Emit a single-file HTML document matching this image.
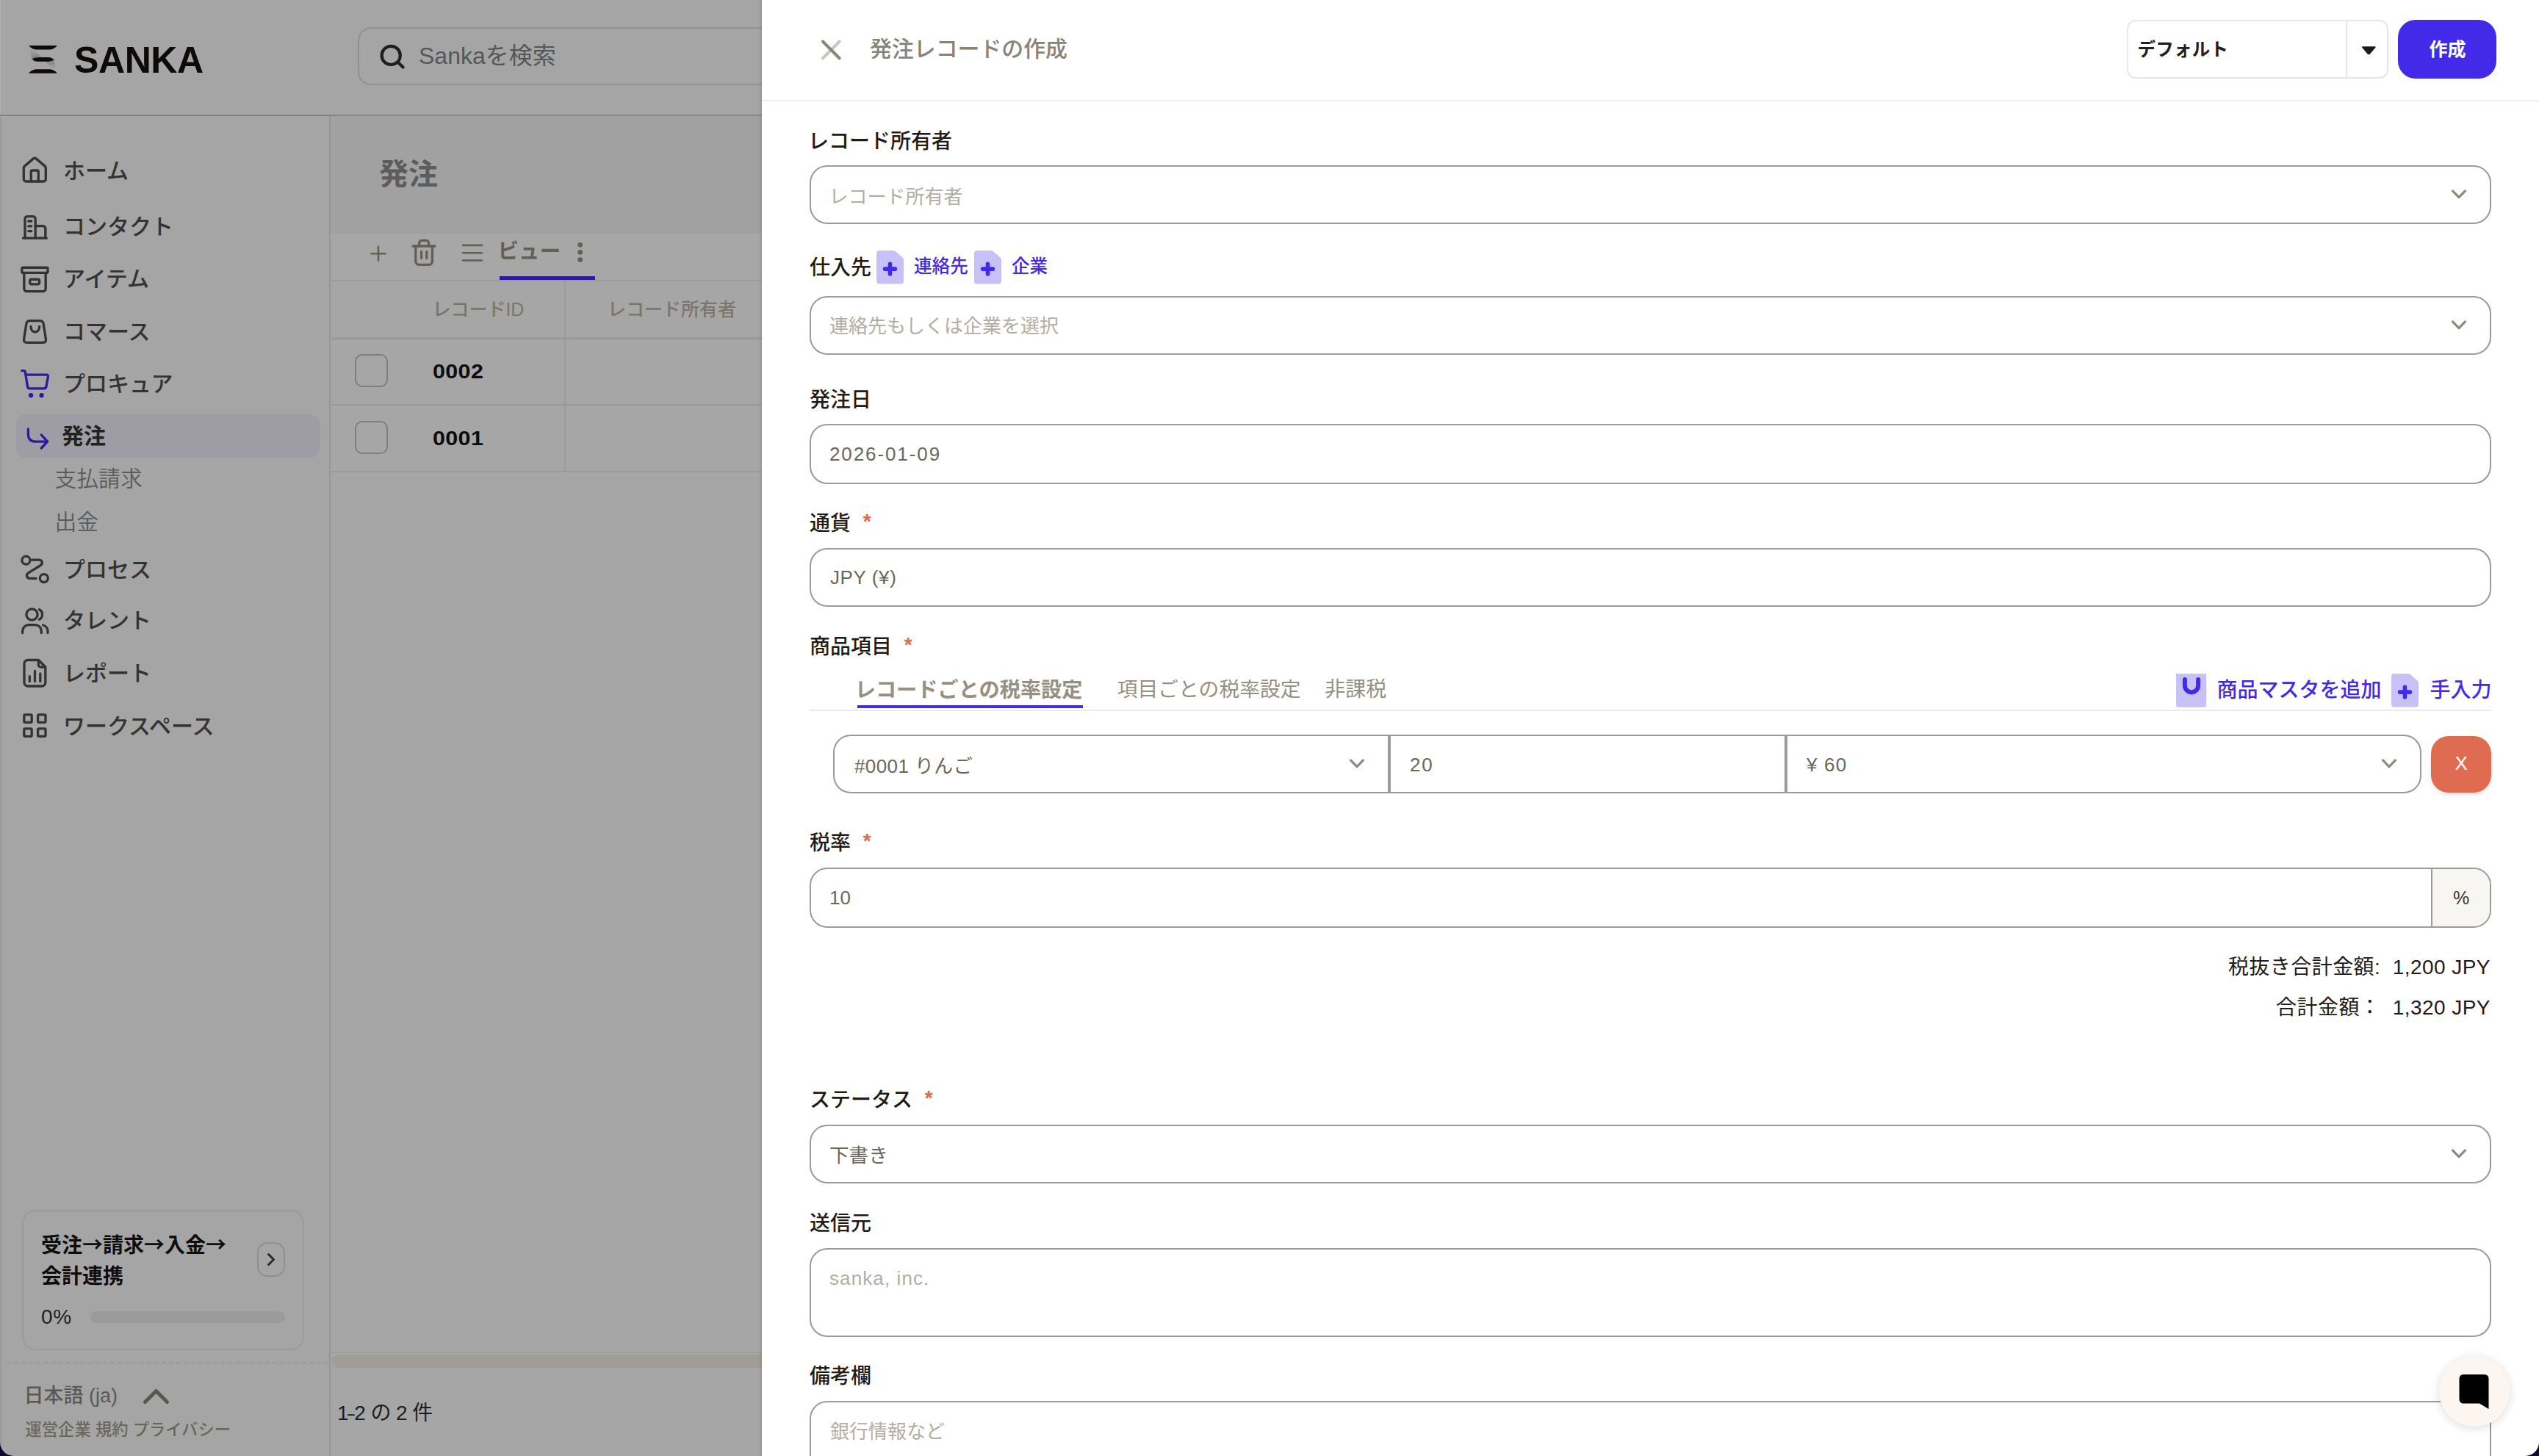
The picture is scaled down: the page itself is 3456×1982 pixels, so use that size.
<!DOCTYPE html>
<html lang="ja">
<head>
<meta charset="utf-8">
<title>発注レコードの作成 - SANKA</title>
<style>
*{box-sizing:border-box;margin:0;padding:0}
html,body{width:3456px;height:1982px;overflow:hidden;background:#a6a6a6}
body{font-family:"Liberation Sans","Noto Sans CJK JP",sans-serif;position:relative;color:#1f1f1f;-webkit-font-smoothing:antialiased}
.abs{position:absolute}
.t{position:absolute;white-space:nowrap;line-height:1}
svg{position:absolute;overflow:visible}
/* ---------- dimmed app (left) ---------- */
#app{position:absolute;left:0;top:0;width:1037px;height:1982px;background:#a5a5a5;overflow:hidden}
#topline{left:0;top:156px;width:1037px;height:2px;background:#858588}
#sideline{left:448px;top:158px;width:2px;height:1824px;background:#969696}
#leftedge{left:0;top:158px;width:2px;height:1824px;background:#9b9b9b}
.nav{font-size:30px;font-weight:500;color:#333;left:86px}
.sub{font-size:29.8px;font-weight:350;color:#5a5a5a;left:74.5px}
.ico{stroke:#333;fill:none;stroke-width:2;stroke-linecap:round;stroke-linejoin:round;width:40px;height:40px;left:27px}
/* ---------- drawer ---------- */
#drawer{position:absolute;left:1037px;top:0;width:2419px;height:1982px;background:#fff;box-shadow:-1px 0 4px rgba(0,0,0,.14)}
#dc{position:absolute;left:0;top:0;width:3456px;height:1982px;overflow:hidden}
.lbl{font-size:28px;font-weight:500;color:#1f1c18;left:1102px}
.req{color:#e0694a;font-weight:700;margin-left:9px;position:relative;top:-2.3px}
.fld{position:absolute;left:1102px;width:2289px;height:80px;border:2px solid #9b9b99;border-radius:24px;background:#fff}
.val{font-size:26px;color:#6a665e}
.ph{font-size:26px;color:#b3aea2}
.chev{stroke:#8e897e;fill:none;stroke-width:3.2;stroke-linecap:round;stroke-linejoin:round}
.ar{font-family:"Noto Sans CJK JP",sans-serif}
.link{font-size:28px;color:#432ae8;font-weight:500}
</style>
</head>
<body>
<div id="app">
  <div class="abs" style="left:450px;top:158px;width:587px;height:1824px;background:#a6a6a6"></div>
  <div class="abs" style="left:450px;top:158px;width:587px;height:160px;background:#a1a1a1"></div>
  <div class="abs" style="left:450px;top:318px;width:587px;height:64px;background:#a7a7a7"></div>
  <div class="abs" id="leftedge"></div>
  <div class="abs" style="left:0;top:0;width:1px;height:156px;background:#b0b0b0"></div>
  <div class="abs" id="topline"></div>
  <div class="abs" id="sideline"></div>
  <!-- logo -->
  <svg style="left:30px;top:52px" width="60" height="58" viewBox="30 52 60 58">
    <defs><linearGradient id="lg1" x1="0" y1="0" x2="0" y2="1"><stop offset="0" stop-color="#a9a9a9"/><stop offset="1" stop-color="#7e7e7e"/></linearGradient>
    <linearGradient id="lg2" x1="0" y1="0" x2="0" y2="1"><stop offset="0" stop-color="#7e7e7e"/><stop offset="1" stop-color="#a9a9a9"/></linearGradient></defs>
    <path d="M40 66.5L46.7 67.4L56 78L43.4 80.2Z" fill="url(#lg1)"/>
    <path d="M61.5 83.8L73.4 81.4L76.4 94.6L71.6 93.9Z" fill="url(#lg2)"/>
    <path d="M39 62.1H78Q73.5 67.6 66.5 67.6H50.5Q43.5 67.6 39 62.1Z" fill="#0e0a08"/>
    <path d="M43.3 80.3Q48.5 78 54 78H66.5Q70.5 78 73.6 81.5Q69.5 83.8 64.5 83.8H50Q46.5 83.8 43.3 80.3Z" fill="#0e0a08"/>
    <path d="M39 99.7H78Q73.5 94.2 66.5 94.2H50.5Q43.5 94.2 39 99.7Z" fill="#0e0a08"/>
  </svg>
  <div class="t" style="left:101px;top:57px;font-size:50px;font-weight:700;color:#0e0a08;letter-spacing:-0.4px">SANKA</div>
  <!-- search -->
  <div class="abs" style="left:487px;top:37px;width:700px;height:79px;border:2px solid #919191;border-radius:18px"></div>
  <svg style="left:512px;top:55px" width="44" height="44" viewBox="0 0 44 44" fill="none" stroke="#1e1e20" stroke-width="4.2" stroke-linecap="round"><circle cx="20.2" cy="20.4" r="12.6"/><path d="M29.6 29.8L36.6 36.6"/></svg>
  <div class="t" style="left:570px;top:60px;font-size:32px;color:#565656">Sankaを検索</div>
  <!-- sidebar -->
  <div class="abs" style="left:22px;top:564px;width:413px;height:59px;border-radius:12px;background:#9e9da6"></div>
  <svg style="left:0;top:0" width="448" height="1982" viewBox="0 0 448 1982" fill="none" stroke="#333" stroke-width="3.3" stroke-linecap="round" stroke-linejoin="round">
    <g transform="translate(27.3,212) scale(1.6667)" stroke-width="2"><path d="M15 21v-8a1 1 0 0 0-1-1h-4a1 1 0 0 0-1 1v8"/><path d="M3 10a2 2 0 0 1 .709-1.528l7-5.999a2 2 0 0 1 2.582 0l7 5.999A2 2 0 0 1 21 10v9a2 2 0 0 1-2 2H5a2 2 0 0 1-2-2z"/></g>
    <g transform="translate(27,289) scale(1.6667)" stroke-width="2"><path d="M4.2 21V5.4a2 2 0 0 1 2-2h4.5a2 2 0 0 1 2 2V21"/><path d="M12.7 11.2h6.2a2 2 0 0 1 2 2V21"/><path d="M2.75 21.1h19"/><path d="M7.1 7.2h2.3M7.1 11.3h2.3M7.1 15.4h2.3"/></g>
    <g transform="translate(27,360.4) scale(1.6667)" stroke-width="2"><rect x="1.7" y="2.3" width="21.1" height="4.3" rx="1"/><path d="M3.5 6.6v12.9a2.2 2.2 0 0 0 2.2 2.2h13.2a2.2 2.2 0 0 0 2.2-2.2V6.6"/><rect x="8.2" y="11.9" width="7.8" height="4" rx="1.4"/></g>
    <path d="M41 436.6H54Q58.6 436.6 59.2 441L62.4 461.5Q63 466.3 58.4 466.3H36.6Q32 466.3 32.6 461.5L35.8 441Q36.4 436.6 41 436.6Z"/><path d="M42 444.5c0 4.5 2.6 7.3 5.8 7.3s5.8-2.8 5.8-7.3"/>
    <g stroke="#2b1ba0"><path d="M29.8 504.7H32.2Q34 504.7 34.3 506.6L37.6 526.4Q38 528.8 40.4 528.8H60Q62.4 528.8 62.9 526.4L65.4 512.5Q65.8 510.1 63.4 510.1H35"/><circle cx="42.1" cy="538.2" r="1.5" fill="#2b1ba0"/><circle cx="56.6" cy="538.2" r="1.5" fill="#2b1ba0"/>
    <path d="M38.4 584V591Q38.4 601.2 48.6 601.2H64"/><path d="M56.3 592L64.6 601.2L56.3 610"/></g>
    <circle cx="35.4" cy="762.7" r="5.5"/><circle cx="59.8" cy="787.1" r="5.5"/><path d="M43.5 762.1H53.3a4 4 0 0 1 2.1 7.4L38.6 779.9a4 4 0 0 0 2.1 7.5H49"/>
    <circle cx="43.5" cy="836.5" r="7.6"/><path d="M30.7 861.5v-2.5a8.3 8.3 0 0 1 8.3-8.3h9a8.3 8.3 0 0 1 8.3 8.3v2.5"/><path d="M53.5 829.75A7.6 7.6 0 0 1 53.5 843.25"/><path d="M58.5 851a8.3 8.3 0 0 1 6.5 8.1v2.4"/>
    <path d="M52.5 898.5H38a5 5 0 0 0-5 5V929a5 5 0 0 0 5 5H56.8a5 5 0 0 0 5-5V908Z"/><path d="M52.3 898.8v6a3.3 3.3 0 0 0 3.3 3.3h6"/><path d="M40.3 920.6V927.6M47.5 913.4V927.6M54.8 917V927.6"/>
    <rect x="32.8" y="972.9" width="10.4" height="10.4" rx="1.6"/><rect x="51.6" y="972.9" width="10.4" height="10.4" rx="1.6"/><rect x="32.8" y="991.9" width="10.4" height="10.4" rx="1.6"/><rect x="51.6" y="991.9" width="10.4" height="10.4" rx="1.6"/>
  </svg>
  <div class="t nav" style="top:217.5px">ホーム</div>
  <div class="t nav" style="top:294px">コンタクト</div>
  <div class="t nav" style="top:364.5px">アイテム</div>
  <div class="t nav" style="top:436.5px">コマース</div>
  <div class="t nav" style="top:508px">プロキュア</div>
  <div class="t nav" style="top:579px;left:84px;font-weight:700;color:#222">発注</div>
  <div class="t sub" style="top:636.5px">支払請求</div>
  <div class="t sub" style="top:696px">出金</div>
  <div class="t nav" style="top:761px">プロセス</div>
  <div class="t nav" style="top:830px">タレント</div>
  <div class="t nav" style="top:902px">レポート</div>
  <div class="t nav" style="top:973.5px">ワークスペース</div>
  <!-- toolbar -->
  <svg style="left:449px;top:318px" width="588" height="66" viewBox="449 318 588 66" fill="none" stroke="#645f55" stroke-width="2.6" stroke-linecap="round" stroke-linejoin="round">
    <path d="M505.5 345.2H524.5M515 335.7V354.7"/>
    <g stroke-width="3.3"><path d="M562.2 335H592"/><path d="M570.6 335V331a3.6 3.6 0 0 1 3.6-3.6h5.8a3.6 3.6 0 0 1 3.6 3.6v4"/><path d="M565.8 335V355.8a4.5 4.5 0 0 0 4.5 4.5h13.6a4.5 4.5 0 0 0 4.5-4.5V335"/><path d="M573.6 342.5v9M580.8 342.5v9"/></g>
    <path d="M630 333.9H656M630 344.2H656M630 354.5H656"/>
    <g fill="#645f55" stroke="none"><circle cx="789.7" cy="333.2" r="3.3"/><circle cx="789.7" cy="343.4" r="3.3"/><circle cx="789.7" cy="353.6" r="3.3"/></g>
  </svg>
  <div class="t" style="left:677.5px;top:328px;font-size:28.6px;font-weight:700;color:#645f55">ビュー</div>
  <div class="abs" style="left:680px;top:376px;width:130px;height:6px;background:#2b1ba0"></div>
  <div class="abs" style="left:449px;top:381px;width:588px;height:2px;background:#9c9c9c"></div>
  <!-- table -->
  <div class="abs" style="left:449px;top:459px;width:588px;height:4px;background:#9b9b9b"></div>
  <div class="abs" style="left:449px;top:550px;width:588px;height:2px;background:#9a9a9a"></div>
  <div class="abs" style="left:449px;top:641px;width:588px;height:2px;background:#9a9a9a"></div>
  <div class="abs" style="left:768px;top:383px;width:2px;height:259px;background:#9a9a9a"></div>
  <div class="t" style="left:588.4px;top:408.5px;font-size:25px;font-weight:500;color:#7a766c">レコードID</div>
  <div class="t" style="left:827px;top:408.5px;font-size:25px;font-weight:500;color:#7a766c">レコード所有者</div>
  <div class="abs" style="left:483px;top:481.5px;width:45px;height:45px;border:2px solid #7f7f7f;border-radius:10px"></div>
  <div class="abs" style="left:483px;top:572.5px;width:45px;height:45px;border:2px solid #7f7f7f;border-radius:10px"></div>
  <div class="t" style="left:589px;top:493px;font-size:27px;font-weight:700;color:#0d0d0d;letter-spacing:.3px;transform:scaleX(1.13);transform-origin:0 50%">0002</div>
  <div class="t" style="left:589px;top:584px;font-size:27px;font-weight:700;color:#0d0d0d;letter-spacing:.3px;transform:scaleX(1.13);transform-origin:0 50%">0001</div>
  <!-- footer -->
  <div class="abs" style="left:449px;top:1840px;width:588px;height:2px;background:#9d9d9d"></div>
  <div class="abs" style="left:452px;top:1844px;width:585px;height:18px;background:#a09d97;border-radius:9px 0 0 9px"></div>
  <div class="t" style="left:459px;top:1910px;font-size:28px;color:#1c1c1c"><span style="letter-spacing:-1.5px">1</span><span style="display:inline-block;transform:scaleX(.62);transform-origin:0 50%;margin-right:-6.5px">–</span>2<span style="word-spacing:-1.1px"> の 2 件</span></div>
  <!-- onboarding card -->
  <div class="abs" style="left:30px;top:1647px;width:384px;height:191px;border:2px solid #9a9a9a;border-radius:18px"></div>
  <div class="t" style="left:56px;top:1671.5px;font-size:28px;font-weight:700;color:#0d0d0d;line-height:42px;white-space:normal;width:270px">受注<span class="ar">→</span>請求<span class="ar">→</span>入金<span class="ar">→</span><br>会計連携</div>
  <div class="abs" style="left:350px;top:1691px;width:38px;height:47px;border:2px solid #8f8f8f;border-radius:14px"></div>
  <svg style="left:350px;top:1691px" width="38" height="47" viewBox="0 0 38 47" fill="none" stroke="#2a2a2a" stroke-width="3" stroke-linecap="round" stroke-linejoin="round"><path d="M15.5 16.5L22.5 23.5L15.5 30.5"/></svg>
  <div class="t" style="left:56px;top:1779px;font-size:28px;font-weight:500;color:#1e1e1e;letter-spacing:.6px">0%</div>
  <div class="abs" style="left:123px;top:1785px;width:265px;height:16px;border-radius:8px;background:#9b9b9b"></div>
  <div class="abs" style="left:9px;top:1854px;width:438px;height:0;border-top:2px dashed #989898"></div>
  <div class="t" style="left:32.5px;top:1887px;font-size:27px;font-weight:500;color:#5a5855">日本語 (ja)</div>
  <svg style="left:190px;top:1884px" width="46" height="34" viewBox="0 0 46 34" fill="none" stroke="#5a574f" stroke-width="5" stroke-linecap="round" stroke-linejoin="round"><path d="M7.5 24.5L22.5 9.5L37.5 24.5"/></svg>
  <div class="t" style="left:34.5px;top:1936px;font-size:22.3px;font-weight:500;color:#6a665c">運営企業 規約 プライバシー</div>
  <svg style="left:0;top:1963px" width="19" height="19" viewBox="0 0 19 19"><path d="M0 0V19H19A19 19 0 0 1 0 0Z" fill="#13052e"/></svg>
  <!-- page title -->
  <div class="t" style="left:516px;top:217px;font-size:40px;font-weight:700;color:#5c5c5f">発注</div>
</div>
<div id="drawer"></div>
<div id="dc">
  <!-- header -->
  <svg style="left:1112px;top:48px" width="40" height="40" viewBox="0 0 40 40" fill="none" stroke-width="4.2" stroke-linecap="round"><path d="M30.6 8.6L8 31.2" stroke="#cac7be"/><path d="M8 8.6L30.6 31.2" stroke="#8c8579"/></svg>
  <div class="t" style="left:1184px;top:51.8px;font-size:29.9px;font-weight:500;color:#87827a">発注レコードの作成</div>
  <div class="abs" style="left:2895px;top:27px;width:356px;height:80px;border:2px solid #e7e7e7;border-radius:12px"></div>
  <div class="abs" style="left:3193px;top:29px;width:2px;height:76px;background:#e7e7e7"></div>
  <div class="t" style="left:2909.4px;top:56px;font-size:24.5px;letter-spacing:.3px;font-weight:700;color:#222">デフォルト</div>
  <svg style="left:3212px;top:59px" width="26" height="20" viewBox="0 0 26 20"><path d="M4.2 4.2H20.4Q22.6 4.2 21.2 6L14 14.4Q12.3 16 10.6 14.4L3.4 6Q2 4.2 4.2 4.2Z" fill="#1c1a18"/></svg>
  <div class="abs" style="left:3264px;top:27px;width:134px;height:80px;border-radius:24px;background:#432ae8"></div>
  <div class="t" style="left:3306.5px;top:55px;font-size:25px;font-weight:700;color:#fff">作成</div>
  <div class="abs" style="left:1037px;top:136px;width:2419px;height:2px;background:#ededed"></div>
  <!-- form -->
  <div class="t lbl" style="top:178.5px;left:1100px">レコード所有者</div>
  <div class="fld" style="top:225px"></div>
  <div class="t ph" style="left:1128.4px;top:254.5px">レコード所有者</div>
  <svg style="left:3333.3px;top:255px" width="28" height="20" viewBox="0 0 28 20" class="chev"><path d="M5.5 4.9L14 13.6L22.5 4.9"/></svg>
  <div class="t lbl" style="top:350.5px">仕入先</div>
  <svg style="left:1193.4px;top:341.2px" width="38" height="46" viewBox="0 0 38 46"><path d="M4 0H22.5Q24.4 0 25.9 1.3L35.6 9.6Q37.1 10.9 37.1 12.9V41.6a4 4 0 0 1-4 4H4a4 4 0 0 1-4-4V4a4 4 0 0 1 4-4Z" fill="#c7c1f7"/><path d="M11.6 25.1H25.4M18.5 18.2V32" stroke="#432ae8" stroke-width="5.6" stroke-linecap="round" fill="none"/></svg>
  <div class="t link" style="left:1244px;top:350.5px;font-size:24.6px">連絡先</div>
  <svg style="left:1325.5px;top:341.2px" width="38" height="46" viewBox="0 0 38 46"><path d="M4 0H22.5Q24.4 0 25.9 1.3L35.6 9.6Q37.1 10.9 37.1 12.9V41.6a4 4 0 0 1-4 4H4a4 4 0 0 1-4-4V4a4 4 0 0 1 4-4Z" fill="#c7c1f7"/><path d="M11.6 25.1H25.4M18.5 18.2V32" stroke="#432ae8" stroke-width="5.6" stroke-linecap="round" fill="none"/></svg>
  <div class="t link" style="left:1377px;top:350.5px;font-size:24.6px">企業</div>
  <div class="fld" style="top:403px"></div>
  <div class="t ph" style="left:1129px;top:431px">連絡先もしくは企業を選択</div>
  <svg style="left:3333.3px;top:433px" width="28" height="20" viewBox="0 0 28 20" class="chev"><path d="M5.5 4.9L14 13.6L22.5 4.9"/></svg>
  <div class="t lbl" style="top:530.5px">発注日</div>
  <div class="fld" style="top:577px;height:82px"></div>
  <div class="t val" style="left:1129px;top:605px;letter-spacing:1.9px">2026-01-09</div>
  <div class="t lbl" style="top:698.5px">通貨 <span class="req">*</span></div>
  <div class="fld" style="top:746px"></div>
  <div class="t val" style="left:1130px;top:772.7px;letter-spacing:.6px">JPY (¥)</div>
  <div class="t lbl" style="top:866.5px">商品項目 <span class="req">*</span></div>
  <div class="t" style="left:1163.7px;top:925.2px;font-size:28.2px;font-weight:700;color:#968f82">レコードごとの税率設定</div>
  <div class="abs" style="left:1167px;top:959.6px;width:307px;height:4.6px;background:#432ae8"></div>
  <div class="t" style="left:1520.7px;top:925.2px;font-size:27.8px;color:#968f82">項目ごとの税率設定</div>
  <div class="t" style="left:1803.3px;top:925.2px;font-size:28px;color:#968f82">非課税</div>
  <div class="abs" style="left:1102px;top:966px;width:2289px;height:2px;background:#e9e9e9"></div>
  <svg style="left:2962.3px;top:917px" width="42" height="46" viewBox="0 0 42 46"><path d="M0 0H41.2V43a2.8 2.8 0 0 1-2.8 2.8H2.8A2.8 2.8 0 0 1 0 43Z" fill="#c7c1f7"/><path d="M11.9 8.1V16.3a9.1 9.1 0 0 0 18.2 0V8.1" stroke="#432ae8" stroke-width="6" stroke-linecap="round" fill="none"/></svg>
  <div class="t link" style="left:3017.4px;top:925.7px">商品マスタを追加</div>
  <svg style="left:3255.3px;top:917px" width="38" height="46" viewBox="0 0 38 46"><path d="M4 0H22.5Q24.4 0 25.9 1.3L35.6 9.6Q37.1 10.9 37.1 12.9V41.6a4 4 0 0 1-4 4H4a4 4 0 0 1-4-4V4a4 4 0 0 1 4-4Z" fill="#c7c1f7"/><path d="M11.6 25.1H25.4M18.5 18.2V32" stroke="#432ae8" stroke-width="5.6" stroke-linecap="round" fill="none"/></svg>
  <div class="t link" style="left:3307.6px;top:925.7px">手入力</div>
  <!-- item row -->
  <div class="abs" style="left:1134.3px;top:1000px;width:756.5px;height:80px;border:2px solid #9b9b99;border-radius:24px 0 0 24px"></div>
  <div class="abs" style="left:1890.8px;top:1000px;width:540px;height:80px;border:2px solid #9b9b99"></div>
  <div class="abs" style="left:2430.8px;top:1000px;width:864.8px;height:80px;border:2px solid #9b9b99;border-radius:0 24px 24px 0"></div>
  <div class="abs" style="left:1888.6px;top:1000px;width:4.6px;height:80px;background:#9b9b99"></div>
  <div class="abs" style="left:2428.6px;top:1000px;width:4.6px;height:80px;background:#9b9b99"></div>
  <div class="t val" style="left:1163px;top:1029.5px;letter-spacing:.4px">#0001 りんご</div>
  <svg style="left:1832.9px;top:1030px" width="28" height="20" viewBox="0 0 28 20" class="chev"><path d="M5.5 4.9L14 13.6L22.5 4.9"/></svg>
  <div class="t val" style="left:1919px;top:1028px;letter-spacing:1.8px">20</div>
  <div class="t val" style="left:2459px;top:1027.5px;letter-spacing:1.2px">¥ 60</div>
  <svg style="left:3238px;top:1030.3px" width="28" height="20" viewBox="0 0 28 20" class="chev"><path d="M5.5 4.9L14 13.6L22.5 4.9"/></svg>
  <div class="abs" style="left:3309px;top:1002px;width:82px;height:77px;border-radius:24px;background:#df6c50;box-shadow:0 3px 5px rgba(0,0,0,.12)"></div>
  <div class="t" style="left:3341.5px;top:1026.4px;font-size:26px;color:#fff">X</div>
  <div class="t lbl" style="top:1133.5px">税率 <span class="req">*</span></div>
  <div class="fld" style="top:1181px;height:82px;overflow:hidden"><div class="abs" style="left:2205px;top:0;width:84px;height:78px;background:#f8f6f2;border-left:2px solid #9b9b99"></div></div>
  <div class="t val" style="left:1129px;top:1208.6px">10</div>
  <div class="t" style="left:3339px;top:1209.6px;font-size:25px;color:#3a3733">%</div>
  <div class="t" style="right:66px;top:1302.5px;font-size:28px;letter-spacing:.45px;color:#1f1c18">税抜き合計金額:&nbsp; 1,200 JPY</div>
  <div class="t" style="right:66px;top:1357.5px;font-size:28px;letter-spacing:.45px;color:#1f1c18">合計金額：&nbsp; 1,320 JPY</div>
  <div class="t lbl" style="top:1483.5px">ステータス <span class="req">*</span></div>
  <div class="fld" style="top:1531px"></div>
  <div class="t val" style="left:1129px;top:1559.6px;font-size:26.6px">下書き</div>
  <svg style="left:3333.3px;top:1561px" width="28" height="20" viewBox="0 0 28 20" class="chev"><path d="M5.5 4.9L14 13.6L22.5 4.9"/></svg>
  <div class="t lbl" style="top:1651.5px">送信元</div>
  <div class="fld" style="top:1699px;height:121px"></div>
  <div class="t ph" style="left:1129px;top:1727px;letter-spacing:1.1px">sanka, inc.</div>
  <div class="t lbl" style="top:1859.5px">備考欄</div>
  <div class="fld" style="top:1907px;height:120px"></div>
  <div class="t ph" style="left:1130px;top:1936px">銀行情報など</div>
  <!-- chat bubble -->
  <div class="abs" style="left:3320px;top:1846px;width:96px;height:96px;border-radius:48px;background:#fdf5f0;box-shadow:0 2px 14px rgba(0,0,0,.14)"></div>
  <svg style="left:3346px;top:1869px" width="44" height="52" viewBox="0 0 44 52"><path d="M7 2H36a5.5 5.5 0 0 1 5.500 5.500V49L29 41.500H7A5.500 5.500 0 0 1 1.500 36V7.500A5.500 5.500 0 0 1 7 2Z" fill="#000"/></svg>
  <svg style="left:3437px;top:1963px" width="19" height="19" viewBox="0 0 19 19"><path d="M19 0V19H0A19 19 0 0 0 19 0Z" fill="#13052e"/></svg>
</div>
</body>
</html>
